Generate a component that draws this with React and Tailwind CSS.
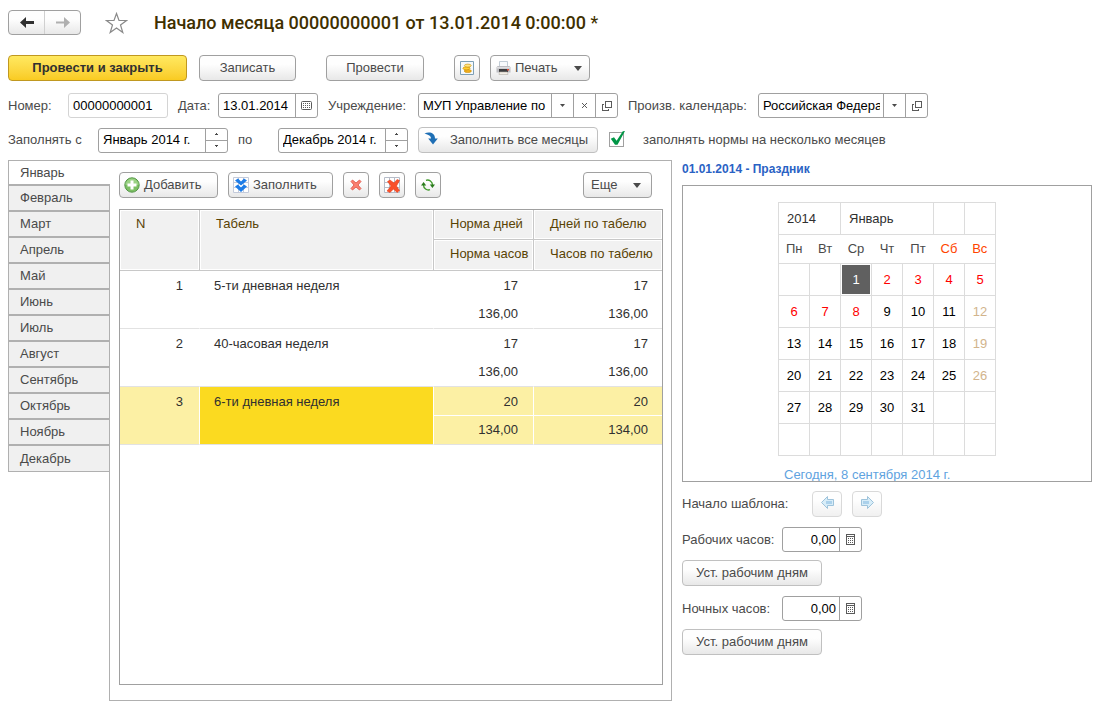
import { useState } from "react";

const months = ["Январь", "Февраль", "Март", "Апрель", "Май", "Июнь", "Июль", "Август", "Сентябрь", "Октябрь", "Ноябрь", "Декабрь"];

const rows = [
  { n: 1, name: "5-ти дневная неделя", days: "17", hours: "136,00" },
  { n: 2, name: "40-часовая неделя", days: "17", hours: "136,00" },
  { n: 3, name: "6-ти дневная неделя", days: "20", hours: "134,00" },
];

const weekDays = ["Пн", "Вт", "Ср", "Чт", "Пт", "Сб", "Вс"];
const weeks = [
  ["", "", 1, 2, 3, 4, 5],
  [6, 7, 8, 9, 10, 11, 12],
  [13, 14, 15, 16, 17, 18, 19],
  [20, 21, 22, 23, 24, 25, 26],
  [27, 28, 29, 30, 31, "", ""],
  ["", "", "", "", "", "", ""],
];

function dayColor(day, col) {
  if (day === 1) return "bg-[#606060] text-white shadow-[inset_0_0_0_1px_#fff]";
  if (day <= 8) return "text-[#ff0000]";
  if (col === 6) return "text-[#d2b48c]";
  return "text-black";
}

function Btn({ className = "", soft = false, children, ...rest }) {
  return (
    <button
      type="button"
      className={`flex h-[26px] shrink-0 items-center whitespace-nowrap rounded-[4px] border bg-linear-to-b from-[#fefefe] from-35% to-[#e8e8e8] ${soft ? "border-[#c0c0c0]" : "border-[#a0a0a0]"} ${className}`}
      {...rest}
    >
      {children}
    </button>
  );
}

function Caret({ small = false }) {
  return small ? (
    <svg width="5" height="3" viewBox="0 0 5 3"><path d="M0 0h5L2.5 3z" fill="#4a4a4a" /></svg>
  ) : (
    <svg width="8" height="5" viewBox="0 0 8 5"><path d="M0 0h8L4 5z" fill="#4a4a4a" /></svg>
  );
}

function OpenIcon() {
  return (
    <svg width="10" height="10" viewBox="0 0 10 10" fill="none" stroke="#5a5a5a" shapeRendering="crispEdges">
      <path d="M3.5.5h6v6h-6z" />
      <path d="M2 3.5H.5v6h6V8" />
    </svg>
  );
}

function DateIcon() {
  return (
    <svg width="11" height="9" viewBox="0 0 11 9">
      <rect x=".5" y=".5" width="10" height="8" rx="1" fill="none" stroke="#5a5a5a" />
      <g fill="#5a5a5a" shapeRendering="crispEdges">
        {[2, 4, 6].map((y) => [2, 4, 6, 8].map((x) => <rect key={`${x}-${y}`} x={x} y={y} width="1" height="1" />))}
      </g>
    </svg>
  );
}

function CalcIcon() {
  return (
    <svg width="9" height="11" viewBox="0 0 9 11" shapeRendering="crispEdges">
      <path d="M.5.5h8v10h-8zM1 2.5h7" fill="none" stroke="#5a5a5a" />
      <g fill="#5a5a5a">
        {[4, 6, 8].map((y) => [2, 4, 6].map((x) => <rect key={`${x}-${y}`} x={x} y={y} width="1" height="1" />))}
      </g>
    </svg>
  );
}

function Part({ label, children }) {
  return (
    <button type="button" aria-label={label} className="flex w-[22px] shrink-0 items-center justify-center border-l border-[#a0a0a0]">
      {children}
    </button>
  );
}

function Field({ id, value, className = "", inputClass = "", border = "border-[#a0a0a0]", children }) {
  const [text, setText] = useState(value);
  return (
    <div className={`flex h-[25px] shrink-0 overflow-hidden rounded-[3px] border bg-white ${border} ${className}`}>
      <input
        id={id}
        value={text}
        onChange={(e) => setText(e.target.value)}
        className={`w-0 min-w-0 flex-1 bg-transparent text-black outline-none ${inputClass || "ml-1 mr-[3px]"}`}
      />
      {children}
    </div>
  );
}

function Spinner() {
  return (
    <div className="flex w-[22px] shrink-0 flex-col border-l border-[#a0a0a0]">
      <button type="button" aria-label="Следующий месяц" className="flex flex-1 items-center justify-center border-b border-[#a0a0a0]">
        <svg width="3" height="2" viewBox="0 0 3 2" shapeRendering="crispEdges"><path d="M1 0h1v1h1v1H0V1h1z" fill="#4a4a4a" /></svg>
      </button>
      <button type="button" aria-label="Предыдущий месяц" className="flex flex-1 items-center justify-center">
        <svg width="3" height="2" viewBox="0 0 3 2" shapeRendering="crispEdges"><path d="M0 0h3v1H2v1H1V1H0z" fill="#4a4a4a" /></svg>
      </button>
    </div>
  );
}

function Header() {
  return (
    <header className="flex items-center">
      <div className="flex h-[25px] w-[73px] overflow-hidden rounded-[4px] border border-[#a0a0a0] bg-linear-to-b from-[#fefefe] from-35% to-[#e8e8e8]">
        <button type="button" aria-label="Назад" className="flex flex-1 items-center justify-center border-r border-[#d0d0d0]">
          <svg width="14" height="11" viewBox="0 0 14 11"><path d="M0 5.5 6 0v4h8v3H6v4z" fill="#303030" /></svg>
        </button>
        <button type="button" aria-label="Вперед" className="flex flex-1 items-center justify-center">
          <svg width="14" height="11" viewBox="0 0 14 11"><path d="M14 5.5 8 0v4.5H0v2h8V11z" fill="#b0b0b0" /></svg>
        </button>
      </div>
      <button type="button" aria-label="В избранное" className="ml-6">
        <svg width="23" height="22" viewBox="0 0 23 22" fill="none" stroke="#8a8a8a" strokeWidth="1.2">
          <path d="M11.5 1.5 14 8.500h7.500l-6 4.500 2.300 7.500-6.300-4.600-6.300 4.600L7.500 13l-6-4.500H9z" />
        </svg>
      </button>
      <h1 className="ml-[26px] whitespace-nowrap font-[Roboto,sans-serif] text-[18px] leading-[25px] font-medium text-[#3f3000]">
        Начало месяца 00000000001 от 13.01.2014 0:00:00 <span className="font-normal">*</span>
      </h1>
    </header>
  );
}

function CommandBar() {
  return (
    <div className="mt-5 flex">
      <button type="button" className="h-[26px] w-[179px] rounded-[4px] border border-[#c09820] bg-linear-to-b from-[#ffe95f] to-[#f9cb20] font-bold text-[#303030]">
        Провести и закрыть
      </button>
      <Btn className="ml-3 w-[97px] justify-center">Записать</Btn>
      <Btn className="ml-[30px] w-[98px] justify-center">Провести</Btn>
      <Btn className="ml-[30px] w-[26px] justify-center" aria-label="Движения документа">
        <svg width="14" height="14" viewBox="0 0 14 14">
          <path d="M.5.5h13v13H.5z" fill="#f4f9fc" stroke="#7d9fb5" />
          <g stroke="#c98a00" strokeWidth=".6">
            <ellipse cx="7.8" cy="10" rx="3.600" ry="1.500" fill="#f0b020" />
            <ellipse cx="6.500" cy="7.300" rx="3.600" ry="1.500" fill="#ffd030" />
            <ellipse cx="7.800" cy="4.600" rx="3.400" ry="1.500" fill="#ffe680" />
          </g>
        </svg>
      </Btn>
      <Btn className="ml-[10px] w-[100px] pl-[5px]">
        <svg width="15" height="14" viewBox="0 0 15 14">
          <path d="M3.500.5h8v6h-8z" fill="#f8fafc" stroke="#b4c0cc" strokeWidth=".8" />
          <path d="M1.500 5h12l1 1.500v5h-14v-5z" fill="#bdbdc1" />
          <path d="M1 6h13v1.500H1z" fill="#dedee1" />
          <path d="M3 8h9v3H3z" fill="#3c3c3e" />
          <path d="M11 8h2v1.500h-2z" fill="#e04a38" />
          <path d="M3.500 11h8l.5 2.500H3z" fill="#f4efe6" stroke="#b5b0a8" strokeWidth=".6" />
        </svg>
        <span className="mr-4 ml-1">Печать</span>
        <Caret />
      </Btn>
    </div>
  );
}

function Filters() {
  const [checked, setChecked] = useState(true);
  return (
    <>
      <div className="mt-3 flex items-center">
        <label htmlFor="number" className="w-[60px]">Номер:</label>
        <Field id="number" value="00000000001" className="w-[100px]" border="border-[#d4d4d4]" />
        <label htmlFor="date" className="ml-[10px] w-[40px]">Дата:</label>
        <Field id="date" value="13.01.2014" className="w-[100px]">
          <Part label="Выбрать дату"><DateIcon /></Part>
        </Field>
        <label htmlFor="org" className="ml-[10px] w-[90px]">Учреждение:</label>
        <Field id="org" value="МУП Управление по" className="w-[200px]">
          <Part label="Выбрать учреждение"><Caret small /></Part>
          <Part label="Очистить">
            <svg width="5" height="5" viewBox="0 0 5 5" stroke="#4a4a4a" strokeWidth=".9"><path d="M0 0l5 5M5 0 0 5" /></svg>
          </Part>
          <Part label="Открыть учреждение"><OpenIcon /></Part>
        </Field>
        <label htmlFor="cal" className="ml-[10px] w-[130px] whitespace-nowrap">Произв. календарь:</label>
        <Field id="cal" value="Российская Федерация" className="w-[170px]">
          <Part label="Выбрать календарь"><Caret small /></Part>
          <Part label="Открыть календарь"><OpenIcon /></Part>
        </Field>
      </div>
      <div className="mt-[9px] flex items-center">
        <label htmlFor="from" className="w-[90px]">Заполнять с</label>
        <Field id="from" value="Январь 2014 г." className="w-[130px]"><Spinner /></Field>
        <label htmlFor="to" className="ml-[10px] w-[40px]">по</label>
        <Field id="to" value="Декабрь 2014 г." className="w-[130px]"><Spinner /></Field>
        <Btn soft className="ml-[10px] w-[180px] pl-[5px]">
          <svg width="14" height="13" viewBox="0 0 14 13" className="mr-3 mb-1">
            <path d="M.5 1.500C5-.5 11 .5 11 6.500H13.800L9 12.500 4.200 6.500H7C7 3.800 4.500 2.800.5 1.500z" fill="#1f6fb5" />
          </svg>
          Заполнить все месяцы
        </Btn>
        <span className="relative ml-[11px] flex size-4">
          <input
            id="norms"
            type="checkbox"
            checked={checked}
            onChange={(e) => setChecked(e.target.checked)}
            className="size-[15px] appearance-none border border-[#a0a0a0] bg-white"
          />
          {checked && (
            <svg width="15" height="15" viewBox="0 0 15 15" className="pointer-events-none absolute -top-px left-px">
              <path d="M.8 7.800 4 6.200l2.600 3.600L12.800.2 15 0 7.500 13.800H5z" fill="#009646" />
            </svg>
          )}
        </span>
        <label htmlFor="norms" className="ml-[18px] whitespace-nowrap">заполнять нормы на несколько месяцев</label>
      </div>
    </>
  );
}

function Toolbar() {
  return (
    <div className="flex">
      <Btn className="w-[99px] pl-1">
        <svg width="16" height="16" viewBox="0 0 16 16" className="mr-1">
          <circle cx="8" cy="8" r="7.200" fill="#7cbf63" stroke="#559648" />
          <path d="M1.500 8a6.500 6.500 0 0 1 13 0z" fill="#9ad284" />
          <path d="M6.500 3.500h3v3h3v3h-3v3h-3v-3h-3v-3h3z" fill="#fff" />
        </svg>
        Добавить
      </Btn>
      <Btn className="ml-[10px] w-[105px] pl-1">
        <svg width="16" height="16" viewBox="0 0 16 16" className="mr-1">
          <path d="M.5.5h15v15H.5zM5.500 0v16M10.500 0v16M0 5.500h16M0 10.500h16" fill="#fff" stroke="#c3cada" />
          <path d="M2 3.500 5 1.500 8 4.500l3-3 3 2L8 8.500zM2 9.500l3-2 3 3 3-3 3 2L8 15z" fill="#1c7ce8" />
        </svg>
        Заполнить
      </Btn>
      <Btn className="ml-[10px] w-[26px] justify-center" aria-label="Удалить">
        <svg width="12" height="12" viewBox="0 0 12 12">
          <path d="M1 2.500 2.500 1 6 4 9.500 1 11 2.500 8 6l3 3.500L9.500 11 6 8l-3.500 3L1 9.500 4 6z" fill="#fa8070" stroke="#dd4c40" strokeWidth=".8" />
        </svg>
      </Btn>
      <Btn className="ml-[10px] w-[26px] justify-center" aria-label="Очистить таблицу">
        <svg width="16" height="16" viewBox="0 0 16 16">
          <path d="M.5.5h15v15H.5zM5.500 0v16M10.500 0v16M0 5.500h16M0 10.500h16" fill="#fff" stroke="#b6bcc8" />
          <path d="M3.500 4.500 6 3l4 3 3-3.500 2.500 1L12.500 9l3 4.500-2.500 2-3.500-3.500-3.500 3.500L3 14l4-5z" fill="#f9502a" stroke="#e0350f" strokeWidth=".5" />
        </svg>
      </Btn>
      <Btn className="ml-[10px] w-[26px] justify-center" aria-label="Обновить">
        <svg width="14" height="12" viewBox="0 0 14 12">
          <path d="M5 1.300A5 5 0 0 1 11.500 6M9 10.700A5 5 0 0 1 2.500 6" fill="none" stroke="#3f9a2a" strokeWidth="1.400" />
          <path d="M8.800 5.500H14L11.400 9zM0 6.500h5.200L2.600 3z" fill="#2a7a1c" />
        </svg>
      </Btn>
      <Btn className="mr-[11px] ml-auto w-[69px] pl-[7px]">
        <span className="mr-4">Еще</span>
        <Caret />
      </Btn>
    </div>
  );
}

const th = "border-[#c8c8c8] bg-[#f1f1f1] px-4 text-left align-top font-normal whitespace-nowrap shadow-[inset_0_0_0_1px_#fff]";
const upper = "pt-[2px] leading-[26px] align-top";
const lower = "leading-[28px] align-top";

function DataTable() {
  const [sel, setSel] = useState(3);
  return (
    <div className="mt-[11px] min-h-[475px] flex-1 border border-[#a0a0a0]">
      <table className="w-full table-fixed border-separate border-spacing-0 leading-[28px] text-[#303030]">
        <colgroup>
          <col className="w-[80px]" />
          <col />
          <col className="w-[100px]" />
          <col className="w-[128px]" />
        </colgroup>
        <thead className="text-[#594304]">
          <tr className="h-[30px]">
            <th rowSpan={2} className={`${th} border-r border-b`}>N</th>
            <th rowSpan={2} className={`${th} border-r border-b`}>Табель</th>
            <th className={`${th} border-r border-b`}>Норма дней</th>
            <th className={`${th} border-b`}>Дней по табелю</th>
          </tr>
          <tr className="h-[31px]">
            <th className={`${th} border-r border-b`}>Норма часов</th>
            <th className={`${th} border-b`}>Часов по табелю</th>
          </tr>
        </thead>
        {rows.map((r) => {
          const on = r.n === sel;
          const pale = on ? "bg-[#fcf0a4]" : "";
          const line = on ? "border-white" : "border-transparent";
          const side = on ? "border-r-white" : "border-r-transparent";
          return (
            <tbody key={r.n} onClick={() => setSel(r.n)}>
              <tr className="h-[29px]">
                <td rowSpan={2} className={`border-r border-b border-b-[#e2e2e2] pr-4 text-right ${upper} ${pale} ${side}`}>{r.n}</td>
                <td rowSpan={2} className={`border-r border-b border-b-[#e2e2e2] pl-[14px] ${upper} ${on ? "bg-[#fbda20]" : ""} ${side}`}>{r.name}</td>
                <td className={`border-r border-b pr-[15px] text-right ${upper} ${pale} ${line}`}>{r.days}</td>
                <td className={`border-b pr-[14px] text-right ${upper} ${pale} ${line}`}>{r.days}</td>
              </tr>
              <tr className="h-[29px]">
                <td className={`border-r border-b border-b-[#e2e2e2] pr-[15px] text-right ${lower} ${pale} ${side}`}>{r.hours}</td>
                <td className={`border-b border-b-[#e2e2e2] pr-[14px] text-right ${lower} ${pale}`}>{r.hours}</td>
              </tr>
            </tbody>
          );
        })}
      </table>
    </div>
  );
}

function Calendar() {
  const cell = "border border-[#dcdcdc] p-0";
  return (
    <div className="h-[297px] overflow-hidden border border-[#a0a0a0] pt-4">
      <div className="mx-auto w-[218px]">
        <table className="w-full table-fixed border-collapse text-center text-[#303030]">
          <thead>
            <tr className="h-8">
              <th colSpan={2} className={`${cell} pl-2 text-left font-normal`}>2014</th>
              <th colSpan={3} className={`${cell} pl-2 text-left font-normal`}>Январь</th>
              <td className={cell} />
              <td className={cell} />
            </tr>
            <tr className="h-[29px]">
              {weekDays.map((d, i) => (
                <th key={d} className={`p-0 font-normal ${i === 0 ? "border-l border-[#dcdcdc]" : ""} ${i === 6 ? "border-r border-[#dcdcdc]" : ""} ${i > 4 ? "text-[#ff4500]" : "text-[#4a4a4a]"}`}>{d}</th>
              ))}
            </tr>
          </thead>
          <tbody>
            {weeks.map((w, i) => (
              <tr key={i} className="h-8">
                {w.map((d, j) => (
                  <td key={j} className={`${cell} ${d === "" ? "" : dayColor(d, j)}`}>{d}</td>
                ))}
              </tr>
            ))}
          </tbody>
        </table>
        <a href="#today" className="mt-[11px] ml-[6px] block whitespace-nowrap text-[#5fa3e0]">Сегодня, 8 сентября 2014 г.</a>
      </div>
    </div>
  );
}

function TemplateArrow({ right = false }) {
  return (
    <Btn soft className="w-[30px] justify-center opacity-60" aria-label={right ? "Вперед по шаблону" : "Назад по шаблону"}>
      <svg width="13" height="13" viewBox="0 0 13 13" className={right ? "mb-1 -scale-x-100" : "mb-1"}>
        <path d="M.5 6.500 6.500.5V3.500h6v6h-6v3z" fill="#bfe2f5" stroke="#5f9cc4" />
        <path d="M5 5h6v3H5z" fill="#74b4de" />
      </svg>
    </Btn>
  );
}

function HoursBlock({ id, label }) {
  return (
    <div className="mt-[10px]">
      <div className="flex items-center">
        <label htmlFor={id} className="w-[100px] whitespace-nowrap">{label}</label>
        <Field id={id} value="0,00" className="w-[80px]" inputClass="mr-[3px] text-right">
          <Part label="Калькулятор"><CalcIcon /></Part>
        </Field>
      </div>
      <Btn soft className="mt-2 w-[140px] justify-center">Уст. рабочим дням</Btn>
    </div>
  );
}

export default function App() {
  const [tab, setTab] = useState("Январь");
  return (
    <main className="flex flex-col bg-white pt-[10px] pr-[10px] pb-[5px] pl-2 font-['Liberation_Sans',Arial,sans-serif] text-[13px] leading-4 text-[#4a4a4a]">
      <Header />
      <CommandBar />
      <Filters />
      <div className="mt-[7px] flex">
        <nav className="-mr-px flex w-[102px] flex-col items-stretch" role="tablist">
          {months.map((m, i) => (
            <button
              key={m}
              type="button"
              role="tab"
              aria-selected={m === tab}
              onClick={() => setTab(m)}
              className={`h-[26px] border-l border-[#b0b0b0] pl-[11px] text-left ${i === 0 ? "border-t" : ""} ${i === months.length - 1 ? "border-b" : "border-b-2"} ${m === tab ? "z-10 bg-white" : "border-r bg-[#f0f0f0]"}`}
            >
              {m}
            </button>
          ))}
        </nav>
        <section className="flex min-h-[541px] min-w-0 flex-1 flex-col border border-[#b0b0b0] pt-[11px] pr-2 pb-[15px] pl-[9px]">
          <Toolbar />
          <DataTable />
        </section>
        <aside className="ml-[10px] w-[410px] shrink-0">
          <h2 className="mb-[7px] text-[12px] leading-[18px] font-bold text-[#2a62c4]">01.01.2014 - Праздник</h2>
          <Calendar />
          <div className="mt-[9px] flex items-center">
            <span className="w-[130px]">Начало шаблона:</span>
            <TemplateArrow />
            <span className="w-[10px]" />
            <TemplateArrow right />
          </div>
          <HoursBlock id="work" label="Рабочих часов:" />
          <HoursBlock id="night" label="Ночных часов:" />
        </aside>
      </div>
    </main>
  );
}
